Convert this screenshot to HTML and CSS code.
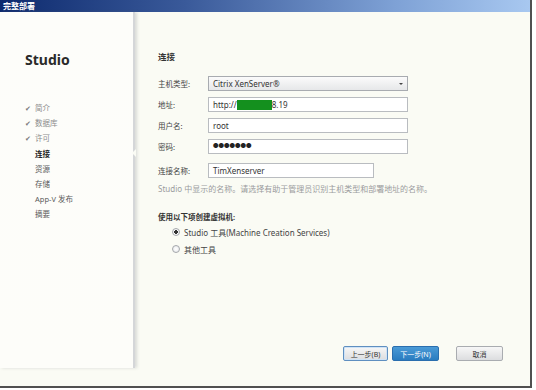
FILE: index.html
```html
<!DOCTYPE html>
<html lang="zh-CN">
  <head>
    <meta charset="UTF-8" />
    <title>完整部署</title>
    <link rel="stylesheet" href="styles.css">
  </head>
  <body>
    <div class="window">
      <div class="titlebar">完整部署</div>

      <div class="window-body">
        <aside class="sidebar">
          <h1 class="brand">Studio</h1>
          <ul class="steps">
            <li class="done"><span class="check">✔</span>简介</li>
            <li class="done"><span class="check">✔</span>数据库</li>
            <li class="done"><span class="check">✔</span>许可</li>
            <li class="current">连接</li>
            <li>资源</li>
            <li>存储</li>
            <li>App-V 发布</li>
            <li>摘要</li>
          </ul>
        </aside>

        <main class="content">
          <h2 class="section-title">连接</h2>

          <div class="form-grid">
            <label>主机类型:</label>
            <div class="select">
              <span>Citrix XenServer®</span>
              <span class="arrow"></span>
            </div>

            <label>地址:</label>
            <div class="field">http://<span class="mask"></span>8.19</div>

            <label>用户名:</label>
            <div class="field">root</div>

            <label>密码:</label>
            <div class="field password">●●●●●●●</div>

            <label class="spaced">连接名称:</label>
            <div class="field short spaced">TimXenserver</div>
          </div>

          <p class="hint">Studio 中显示的名称。请选择有助于管理员识别主机类型和部署地址的名称。</p>

          <p class="group-label">使用以下项创建虚拟机:</p>
          <div class="radio-list">
            <div class="radio-item"><span class="radio checked"></span>Studio 工具(Machine Creation Services)</div>
            <div class="radio-item"><span class="radio"></span>其他工具</div>
          </div>

          <div class="footer">
            <button class="btn btn-back">上一步(B)</button>
            <button class="btn btn-next">下一步(N)</button>
            <button class="btn btn-cancel">取消</button>
          </div>
        </main>
      </div>
    </div>
  </body>
</html>
```

FILE: styles.css
```css
* {
  margin: 0;
  padding: 0;
  box-sizing: border-box;
  font-family: "Noto Sans", "Noto Sans CJK SC", sans-serif;
}

body {
  width: 536px;
  height: 390px;
  background: #ffffff;
  overflow: hidden;
}

.window {
  width: 532px;
  height: 388px;
  display: flex;
  flex-direction: column;
  background: #fafbf4;
  border-right: 2px solid #505050;
  border-bottom: 2px solid #505050;
}

.titlebar {
  height: 12px;
  padding-left: 3px;
  line-height: 12px;
  font-size: 8px;
  font-weight: 700;
  color: #ffffff;
  background: linear-gradient(90deg, #0d2a6e 0%, #3a5a9a 35%, #7fa2d6 75%, #a8c8f0 100%);
}

.window-body {
  flex: 1;
  display: flex;
}

/* left steps panel */
.sidebar {
  position: relative;
  width: 135px;
  height: 356px;
  padding: 41px 0 0 25px;
  background: linear-gradient(180deg, #fdfdfa, #fdfdf9);
  border-right: 2px solid #d4d6d8;
  box-shadow: 2px 0 3px rgba(120, 125, 130, 0.25);
}

.sidebar::after {
  content: "";
  position: absolute;
  right: -3px;
  top: 137px;
  border-top: 4px solid transparent;
  border-bottom: 4px solid transparent;
  border-right: 4px solid #fafbf4;
}

.brand {
  font-size: 14px;
  line-height: 14px;
  font-weight: 700;
  color: #2a2a2a;
  margin-bottom: 34px;
}

.steps {
  list-style: none;
}

.steps li {
  height: 15.2px;
  line-height: 15px;
  font-size: 7.5px;
  color: #5a5a5a;
  padding-left: 10px;
}

.steps li.done {
  padding-left: 0;
  color: #8c8c8c;
}

.steps li.current {
  color: #222222;
  font-weight: 700;
}

.check {
  display: inline-block;
  width: 10px;
  font-size: 6.5px;
  color: #7a7a7a;
}

/* right content */
.content {
  flex: 1;
  display: flex;
  flex-direction: column;
  padding: 40px 27px 25px 23px;
}

.section-title {
  font-size: 8.5px;
  line-height: 10px;
  font-weight: 700;
  color: #333333;
  margin-bottom: 14px;
}

.form-grid {
  display: grid;
  grid-template-columns: 50px 200px;
  grid-auto-rows: 15px;
  row-gap: 6px;
  align-items: center;
}

.form-grid label {
  font-size: 7.5px;
  color: #444444;
}

.form-grid .spaced {
  margin-top: 5px;
}

.field,
.select {
  height: 15px;
  border: 1px solid #b9bcc0;
  background: #ffffff;
  padding-left: 4px;
  font-size: 8px;
  line-height: 13px;
  color: #333333;
  display: flex;
  align-items: center;
}

.field.short {
  width: 166px;
}

.field.password {
  font-size: 5.5px;
  color: #222222;
}

.mask {
  display: inline-block;
  width: 35px;
  height: 10px;
  background: #14901e;
}

.select {
  justify-content: space-between;
  padding-right: 4px;
  background: linear-gradient(180deg, #fbfbfb, #e6e7e9);
  border-color: #a8abb0;
}

.arrow {
  border-left: 2px solid transparent;
  border-right: 2px solid transparent;
  border-top: 2px solid #444444;
}

.hint {
  margin-top: 9px;
  font-size: 8px;
  line-height: 10px;
  color: #9a9c9e;
}

.group-label {
  margin-top: 18px;
  font-size: 7.5px;
  line-height: 10px;
  font-weight: 700;
  color: #333333;
}

.radio-list {
  padding-left: 14px;
  margin-top: 5px;
  display: flex;
  flex-direction: column;
  gap: 7px;
}

.radio-item {
  height: 10px;
  display: flex;
  align-items: center;
  gap: 4px;
  font-size: 8px;
  color: #444444;
}

.radio {
  width: 8px;
  height: 8px;
  border-radius: 50%;
  border: 1px solid #a4a7ab;
  background: radial-gradient(circle, #ffffff, #e4e6e8);
}

.radio.checked {
  background: radial-gradient(circle, #333333 0 1.6px, #ffffff 2px, #e4e6e8);
}

.footer {
  margin-top: auto;
  display: flex;
  justify-content: flex-end;
}

.btn {
  height: 15px;
  width: 47px;
  font-size: 7px;
  border: 1px solid #a9acb0;
  border-radius: 2px;
  color: #333333;
  background: linear-gradient(180deg, #f7f7f7, #dcdddf);
}

.btn-back {
  width: 45px;
  border-color: #5f8fc0;
  box-shadow: inset 0 0 0 1px #cfe3f6;
}

.btn-next {
  margin-left: 4px;
  color: #ffffff;
  border-color: #2a6eae;
  background: linear-gradient(180deg, #4a9ad6, #2a7cc0);
}

.btn-cancel {
  margin-left: 17px;
}
```
